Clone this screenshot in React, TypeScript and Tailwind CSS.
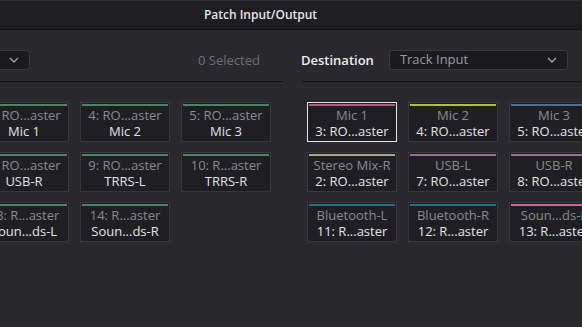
import React from "react";

type Tile = {
  top: string;
  bottom: string;
  bar: string;
  selected?: boolean;
};

const sources: Tile[] = [
  { top: "3: RO...aster", bottom: "Mic 1", bar: "bg-[#4b8465]" },
  { top: "4: RO...aster", bottom: "Mic 2", bar: "bg-[#4b8465]" },
  { top: "5: RO...aster", bottom: "Mic 3", bar: "bg-[#4b8465]" },
  { top: "8: RO...aster", bottom: "USB-R", bar: "bg-[#4b8465]" },
  { top: "9: RO...aster", bottom: "TRRS-L", bar: "bg-[#4b8465]" },
  { top: "10: R...aster", bottom: "TRRS-R", bar: "bg-[#4b8465]" },
  { top: "13: R...aster", bottom: "Soun...ds-L", bar: "bg-[#4b8465]" },
  { top: "14: R...aster", bottom: "Soun...ds-R", bar: "bg-[#4b8465]" },
];

const destinations: Tile[] = [
  { top: "Mic 1", bottom: "3: RO...aster", bar: "bg-[#ad5f80]", selected: true },
  { top: "Mic 2", bottom: "4: RO...aster", bar: "bg-[#a9c43a]" },
  { top: "Mic 3", bottom: "5: RO...aster", bar: "bg-[#4d6f95]" },
  { top: "Stereo Mix-R", bottom: "2: RO...aster", bar: "bg-[#a9a394]" },
  { top: "USB-L", bottom: "7: RO...aster", bar: "bg-[#9a6f94]" },
  { top: "USB-R", bottom: "8: RO...aster", bar: "bg-[#9a6f94]" },
  { top: "Bluetooth-L", bottom: "11: R...aster", bar: "bg-[#2c6b86]" },
  { top: "Bluetooth-R", bottom: "12: R...aster", bar: "bg-[#2c6b86]" },
  { top: "Soun...ds-L", bottom: "13: R...aster", bar: "bg-[#c46f98]" },
];

const Chevron = () => (
  <svg width="10" height="6" viewBox="0 0 10 6" fill="none">
    <path d="M1 1l4 4 4-4" stroke="#a0a0a4" strokeWidth="1.4" />
  </svg>
);

const PatchTile = ({ tile }: { tile: Tile }) => (
  <div
    className={`w-[90px] h-[40px] shrink-0 flex flex-col px-[1px] pt-[1px] bg-[#1f1f23] border ${
      tile.selected ? "border-[#e6e6e6]" : "border-[#36363b]"
    }`}
  >
    <div className={`h-[2px] w-full ${tile.bar}`} />
    <div className="mt-[1px] text-center leading-[16px] text-[#8a8a8e] whitespace-nowrap">
      {tile.top}
    </div>
    <div className="text-center leading-[16px] text-[#e2e2e4] whitespace-nowrap">
      {tile.bottom}
    </div>
  </div>
);

export default function App() {
  return (
    <div
      className="w-[582px] h-[327px] overflow-hidden bg-[#28282d] text-[13px] flex flex-col"
      style={{ fontFamily: '"Open Sans", "Noto Sans", sans-serif' }}
    >
      {/* title bar */}
      <div className="h-[30px] shrink-0 bg-[#1e1e21] border-t border-t-[#2e2e32] border-b border-b-[#0e0e10] flex items-center justify-center pr-[61px]">
        <span className="text-[12px] font-semibold text-[#e4e4e6]">Patch Input/Output</span>
      </div>

      <div className="flex flex-1 min-h-0">
        {/* source panel */}
        <div className="w-[290px] shrink-0 flex flex-col">
          <div className="flex items-center mt-[20px] h-[20px]">
            <div className="-ml-[100px] w-[130px] h-[20px] shrink-0 rounded-[3px] bg-[#1b1b1e] border border-[#3a3a3e] flex items-center justify-end pr-[10px]">
              <Chevron />
            </div>
            <span className="ml-auto mr-[30px] mt-[1px] text-[#707074]">0 Selected</span>
          </div>
          <div className="mt-[11px] mr-[7px] h-px bg-[#111113]" />
          <div className="mt-[20px] flex justify-end pr-[19px]">
            <div className="grid grid-cols-[90px_90px_90px] gap-x-[11px] gap-y-[10px] shrink-0">
              {sources.map((t, i) => (
                <PatchTile key={i} tile={t} />
              ))}
            </div>
          </div>
        </div>

        {/* destination panel */}
        <div className="flex-1 min-w-0 flex flex-col overflow-hidden">
          <div className="flex items-center mt-[20px] h-[20px] pl-[11px]">
            <span className="font-semibold text-[#ececee] mt-[1px]">Destination</span>
            <div className="ml-[15px] w-[179px] h-[20px] shrink-0 rounded-[3px] bg-[#1b1b1e] border border-[#3a3a3e] flex items-center justify-between pl-[10px] pr-[10px]">
              <span className="text-[#9a9a9e]">Track Input</span>
              <Chevron />
            </div>
          </div>
          <div className="mt-[11px] ml-[12px] h-px bg-[#111113]" />
          <div className="mt-[20px] pl-[17px]">
            <div className="grid grid-cols-[90px_90px_90px] gap-x-[11px] gap-y-[10px] w-max">
              {destinations.map((t, i) => (
                <PatchTile key={i} tile={t} />
              ))}
            </div>
          </div>
        </div>
      </div>
    </div>
  );
}
